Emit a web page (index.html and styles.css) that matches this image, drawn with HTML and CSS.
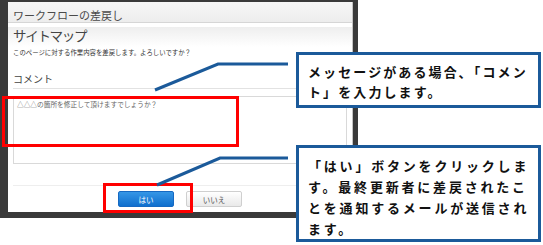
FILE: index.html
```html
<!DOCTYPE html>
<html lang="ja">
<head>
  <meta charset="UTF-8" />
  <title>ワークフローの差戻し</title>
  <link rel="stylesheet" href="styles.css">
</head>
<body>
  <div class="scene">
    <div class="backdrop">
      <div class="dialog">
        <div class="dialog-title">ワークフローの差戻し</div>
        <div class="dialog-body">
          <h1 class="page-name">サイトマップ</h1>
          <p class="lead">このページに対する作業内容を差戻します。よろしいですか？</p>
          <div class="field-label">コメント</div>
          <div class="comment-box">△△△の箇所を修正して頂けますでしょうか？</div>
        </div>
        <div class="dialog-footer">
          <button class="btn btn-primary">はい</button>
          <button class="btn">いいえ</button>
        </div>
      </div>
    </div>

    <!-- annotations -->
    <div class="mark mark-comment"></div>
    <div class="mark mark-yes"></div>
    <svg class="leaders" width="543" height="245" viewBox="0 0 543 245">
      <polyline points="155,90 218,64 288,64" />
      <polyline points="157,185 220,158 288,158" />
    </svg>
    <div class="callout callout-comment">
      メッセージがある場合､「コメン<br>ト」を入力します。
    </div>
    <div class="callout callout-yes">
      「はい」ボタンをクリックしま<br>す。最終更新者に差戻されたこ<br>とを通知するメールが送信され<br>ます。
    </div>
  </div>
</body>
</html>
```

FILE: styles.css
```css
body {
  margin: 0;
  background: #fff;
  font-family: "Noto Sans CJK JP", "Noto Sans", sans-serif;
}

.scene {
  position: relative;
  width: 543px;
  height: 245px;
  overflow: hidden;
}

.backdrop {
  width: 358px;
  background-color: #3a3a3a;
  padding: 2px 5px 6px 8px;
  box-sizing: border-box;
}

.dialog {
  background: #fff;
  border-right: 1px solid #c4c4c4;
}

.dialog-title {
  height: 21px;
  padding: 5px 5px 0;
  box-sizing: border-box;
  line-height: 16px;
  font-size: 11px;
  color: #4a4a4a;
  background: linear-gradient(#f6f6f6, #ededed);
  border-bottom: 1px solid #d6d6d6;
}

.dialog-body {
  padding: 0 5px;
  background: linear-gradient(#eeeeee, #ffffff 20px);
}

.page-name {
  margin: 4px 0 0;
  font-size: 13.5px;
  font-weight: normal;
  letter-spacing: -1.3px;
  line-height: 16px;
  color: #444;
}

.lead {
  margin: 6px 0 0;
  font-size: 6.4px;
  line-height: 8px;
  color: #333;
}

.field-label {
  margin-top: 16px;
  padding-bottom: 3px;
  font-size: 10px;
  line-height: 12px;
  color: #444;
  border-bottom: 1px solid #e2e2e2;
}

.comment-box {
  margin-top: 7px;
  height: 68px;
  box-sizing: border-box;
  border: 1px solid #d9d9d9;
  padding: 3px 3px;
  font-size: 6.7px;
  line-height: 8px;
  color: #666;
}

.dialog-footer {
  margin: 21px 5px 0;
  padding: 5px 0;
  border-top: 1px solid #eeeeee;
  display: flex;
  justify-content: center;
  gap: 12px;
}

.btn {
  width: 56px;
  height: 16px;
  padding: 0;
  font-family: inherit;
  font-size: 7.5px;
  color: #555;
  border: 1px solid #cfcfcf;
  border-radius: 2px;
  background: linear-gradient(#ffffff, #e9e9e9);
}

.btn-primary {
  color: #fff;
  border-color: #1669c2;
  background: linear-gradient(#3596e6, #0f6fce);
}

.mark {
  position: absolute;
  border: 3px solid #ff0000;
  box-sizing: border-box;
}

.mark-comment {
  left: 2px;
  top: 96px;
  width: 237px;
  height: 51px;
}

.mark-yes {
  left: 103px;
  top: 183px;
  width: 90px;
  height: 30px;
}

.leaders {
  position: absolute;
  left: 0;
  top: 0;
}

.leaders polyline {
  fill: none;
  stroke: #1b5a9a;
  stroke-width: 3;
}

.callout {
  position: absolute;
  left: 296px;
  width: 245px;
  box-sizing: border-box;
  border: 3px solid #1b5a9a;
  background: #fff;
  padding: 7px 0 0 9px;
  font-size: 13px;
  font-weight: bold;
  color: #111;
  white-space: nowrap;
}

.callout-comment {
  top: 52px;
  height: 56px;
  line-height: 20px;
  letter-spacing: 2.1px;
}

.callout-yes {
  top: 145px;
  height: 97px;
  line-height: 21px;
  letter-spacing: 2.8px;
}
```
